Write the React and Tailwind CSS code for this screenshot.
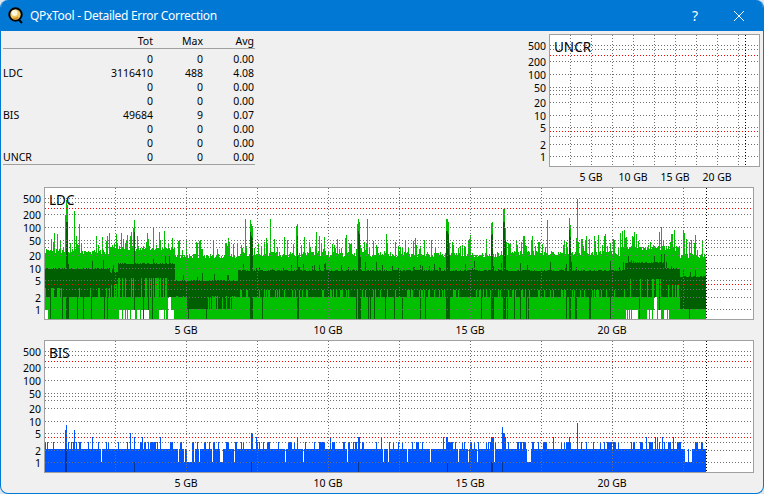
const FONT = "font-['Noto_Sans',sans-serif]";

const rows = [
  ["", "0", "0", "0.00"],
  ["LDC", "3116410", "488", "4.08"],
  ["", "0", "0", "0.00"],
  ["", "0", "0", "0.00"],
  ["BIS", "49684", "9", "0.07"],
  ["", "0", "0", "0.00"],
  ["", "0", "0", "0.00"],
  ["UNCR", "0", "0", "0.00"],
];

const GRID = [11, 15, 27, 40, 53, 56, 60, 68, 81, 93, 102, 110, 122];
const RED = [21, 97];
const TICKS = [
  ["500", 11],
  ["200", 27],
  ["100", 40],
  ["50", 53],
  ["20", 68],
  ["10", 81],
  ["5", 93],
  ["2", 110],
  ["1", 122],
];

// seeded so the noise in the graphs stays the same on every load
function makeRandom(seed) {
  let s = seed;
  return () => {
    s = (s + 0x6d2b79f5) | 0;
    let t = Math.imul(s ^ (s >>> 15), 1 | s);
    t = (t + Math.imul(t ^ (t >>> 7), 61 | t)) ^ t;
    return ((t ^ (t >>> 14)) >>> 0) / 4294967296;
  };
}

// one pixel on, two off, so every dot lands on a whole pixel
function dotsH(x1, x2, y) {
  let d = "";
  for (let x = x1; x < x2; x += 3) d += `M${x} ${y + 0.5}h1`;
  return d;
}

function dotsV(x, y1, y2) {
  let d = "";
  for (let y = y1; y < y2; y += 3) d += `M${x + 0.5} ${y}v1`;
  return d;
}

const LDC_SPIKES = {
  66: 200, 67: 205, 65: 215, 74: 211, 134: 220, 133: 228, 245: 219, 250: 220, 251: 224, 252: 226,
  270: 219, 297: 224, 296: 226, 358: 219, 357: 224, 359: 222, 367: 219, 446: 219, 447: 219, 448: 222,
  491: 223, 492: 222, 503: 209, 504: 209, 505: 228, 547: 220, 569: 218, 570: 225, 577: 199,
  624: 230, 683: 230, 684: 233, 695: 235,
};
const LDC_THICK = [66, 67, 68, 134, 250, 251, 252, 297, 298, 358, 359, 360, 446, 447, 448, 449, 491, 492, 493, 503, 504, 505, 569, 570];

function ldcBand(x) {
  if (x < 110) return [268, 288];
  if (x < 118) return [272, 284];
  if (x < 175) return [263, 278];
  if (x < 238) return [280, 296];
  if (x < 625) return [270, 290];
  if (x < 665) return [262, 279];
  if (x < 680) return [268, 285];
  return [276, 309];
}

function ldcBase(x) {
  if (x < 110) return 251;
  if (x < 175) return 248;
  if (x < 240) return 256;
  if (x < 500) return 254;
  if (x < 620) return 253;
  if (x < 680) return 248;
  return 255;
}

function ldcWhite(x, r) {
  if (x <= 47) return 310;
  if (x >= 168 && x <= 170) return 297;
  if (x >= 654 && x <= 656) return 297;
  if ((x >= 119 && x <= 150) || (x >= 158 && x <= 173) || (x >= 626 && x <= 637) || (x >= 645 && x <= 670)) {
    return r < 0.62 ? 310 : 319;
  }
  return 319;
}

function buildLdc() {
  const rnd = makeRandom(41);
  let light = "";
  let dark = "";
  for (let x = 45; x <= 705; x++) {
    let top = ldcBase(x) + Math.round(rnd() * 5 - 2);
    if (rnd() < 0.3) top -= Math.round(4 + rnd() * 14);
    if (rnd() < 0.04) top -= Math.round(8 + rnd() * 12);
    if (LDC_SPIKES[x]) top = LDC_SPIKES[x];
    const end = ldcWhite(x, rnd());
    light += `M${x + 0.5} ${top}V${end}`;

    let [a, b] = ldcBand(x);
    a += Math.round(rnd());
    if (rnd() < 0.12) a -= Math.round(2 + rnd() * 7);
    if (LDC_THICK.includes(x)) a = Math.max(top + 12, 222);
    if (rnd() < 0.72) b = Math.max(b, 297);
    if ((x >= 187 && x <= 205) || (x > 205 && x <= 233 && rnd() < 0.6) || x >= 680) b = 309;
    const streak = x < 110 ? 0.16 : 0.05;
    if (rnd() < streak || LDC_THICK.includes(x)) b = end;
    dark += `M${x + 0.5} ${a}V${Math.min(b, end)}`;
  }
  return [
    { d: light, color: "#00c000" },
    { d: dark, color: "#005f00" },
  ];
}

const BIS_SPIKES = {
  65: 430, 66: 425, 74: 430, 92: 437, 130: 433, 134: 437, 142: 437, 160: 437, 251: 433, 252: 433, 256: 437,
  297: 437, 330: 437, 358: 437, 359: 437, 381: 437, 443: 437, 446: 437, 447: 437, 491: 437, 492: 437, 493: 437,
  502: 427, 503: 433, 504: 433, 505: 437, 553: 437, 569: 437, 577: 423, 646: 437, 655: 437, 657: 437, 662: 437, 673: 437,
};
const BIS_NOTCH = [101, 178, 184, 187, 188, 189, 190, 191, 194, 199, 212, 220, 221, 222, 234, 285, 303, 347, 383, 388, 407, 430, 458, 468, 477, 494, 527, 528, 529, 530, 685, 686, 687, 689, 690, 691];
const BIS_DARK = [134, 251, 358, 447, 491, 492, 502];

function buildBis() {
  const rnd = makeRandom(9);
  let blue = "";
  let navy = "M65.5 449V472M66.5 449V472";
  let prev = false;
  for (let x = 45; x <= 705; x++) {
    let top = 449;
    const up = rnd() < (prev ? 0.45 : 0.22);
    prev = up;
    if (BIS_NOTCH.includes(x)) top = 462;
    else if (BIS_SPIKES[x]) top = BIS_SPIKES[x];
    else if (up) top = 442;
    blue += `M${x + 0.5} ${top}V472`;
    if (BIS_DARK.includes(x)) navy += `M${x + 0.5} 462V472`;
  }
  return [
    { d: blue, color: "#0055ff" },
    { d: navy, color: "#003399" },
  ];
}

function Plot({ name, x0, y0, width, height = 133, xLines, endX, series = [], xLabels }) {
  const innerW = width - 2;
  const innerH = height - 2;
  const left = x0 + 1;
  const top = y0 + 1;
  const grey =
    GRID.map((off) => dotsH(left, left + innerW, y0 + off)).join("") +
    xLines.map((x) => dotsV(x, top, top + innerH)).join("");
  const red = RED.map((off) => dotsH(left, left + innerW, y0 + off)).join("");
  return (
    <div className="flex h-[153px]">
      <div className="relative w-[40px] shrink-0 mr-[3px]">
        {TICKS.map(([label, off]) => (
          <span key={label} className="absolute right-0 text-[10.5px] leading-[12px] text-black" style={{ top: off - 5 }}>
            {label}
          </span>
        ))}
      </div>
      <div style={{ width }}>
        <div className="relative border border-[#a0a0a0] bg-white" style={{ height }}>
          <svg width={innerW} height={innerH} viewBox={`${left} ${top} ${innerW} ${innerH}`} shapeRendering="crispEdges" className="block">
            {series.map((s) => (
              <path key={s.color} d={s.d} stroke={s.color} strokeWidth="1" fill="none" />
            ))}
            <path d={grey} stroke="#707070" strokeWidth="1" fill="none" />
            <path d={red} stroke="#ff0000" strokeWidth="1" fill="none" />
            <path d={dotsV(endX, top, top + innerH)} stroke="#000" strokeWidth="1" fill="none" />
          </svg>
          <span className="absolute left-[4px] top-[3px] text-[13.5px] leading-[18px] text-black">{name}</span>
        </div>
        <div className="relative h-[20px]">
          {xLabels.map(([label, x]) => (
            <span key={label} className="absolute top-[3px] -translate-x-1/2 whitespace-nowrap text-[10.5px] leading-[14px] text-black" style={{ left: x - x0 }}>
              {label}
            </span>
          ))}
        </div>
      </div>
    </div>
  );
}

const BIG_LINES = [115, 186, 257, 328, 399, 470, 541, 612, 683];
const BIG_LABELS = [
  ["5 GB", 186],
  ["10 GB", 328],
  ["15 GB", 470],
  ["20 GB", 612],
];
const SMALL_LINES = [570, 591, 612, 633, 654, 675, 696, 717, 738];
const SMALL_LABELS = [
  ["5 GB", 591],
  ["10 GB", 633],
  ["15 GB", 675],
  ["20 GB", 717],
];

const ldcSeries = buildLdc();
const bisSeries = buildBis();

function QLogo() {
  return (
    <svg width="16" height="17" viewBox="0 0 16 17" className="shrink-0">
      <path d="M10 12l4 4" stroke="#000" strokeWidth="2" />
      <circle cx="7.5" cy="7.5" r="6.2" fill="#f0c860" stroke="#000" strokeWidth="2" />
      <circle cx="6.5" cy="6" r="3" fill="#fff6dc" />
      <path d="M5 11a4 4 0 0 0 5-1" stroke="#e08a1e" strokeWidth="1.4" fill="none" />
    </svg>
  );
}

export default function App() {
  return (
    <div className={`w-[764px] h-[494px] bg-[#dfe6ee] overflow-hidden ${FONT}`}>
      <div className="h-full flex flex-col rounded-lg overflow-hidden border border-t-0 border-[#0078d4] bg-[#f0f0f0]">
        <div className="h-[31px] shrink-0 flex items-center bg-[#0078d4] text-white">
          <div className="ml-[7px] mr-[6px] flex items-center">
            <QLogo />
          </div>
          <span className="text-[12px] tracking-[-0.3px]">QPxTool - Detailed Error Correction</span>
          <span className="ml-auto mr-[35px] text-[14px]">?</span>
          <svg width="12" height="12" viewBox="0 0 12 12" className="mr-[18px]">
            <path d="M1 1l10 10M11 1L1 11" stroke="#fff" strokeWidth="1" fill="none" />
          </svg>
        </div>

        <div className="flex-1 pt-[3px] text-black">
          <div className="flex justify-between pr-[3px]">
            <div className="ml-[2px] w-[252px] text-[10.5px] leading-[14px]">
              <div className="flex h-[15px] border-b border-[#a0a0a0] mb-[3px]">
                <span className="w-[45px]"></span>
                <span className="w-[105px] text-right">Tot</span>
                <span className="w-[50px] text-right">Max</span>
                <span className="w-[51px] text-right">Avg</span>
              </div>
              <div className="border-b border-[#a0a0a0]">
                {rows.map((r, i) => (
                  <div key={i} className="flex h-[14px]">
                    <span className="w-[45px]">{r[0]}</span>
                    <span className="w-[105px] text-right">{r[1]}</span>
                    <span className="w-[50px] text-right">{r[2]}</span>
                    <span className="w-[51px] text-right">{r[3]}</span>
                  </div>
                ))}
              </div>
            </div>
            <Plot name="UNCR" x0={549} y0={34} width={211} xLines={SMALL_LINES} endX={745} xLabels={SMALL_LABELS} />
          </div>
          <Plot name="LDC" x0={44} y0={187} width={710} xLines={BIG_LINES} endX={706} series={ldcSeries} xLabels={BIG_LABELS} />
          <Plot name="BIS" x0={44} y0={340} width={710} xLines={BIG_LINES} endX={706} series={bisSeries} xLabels={BIG_LABELS} />
        </div>
      </div>
    </div>
  );
}
